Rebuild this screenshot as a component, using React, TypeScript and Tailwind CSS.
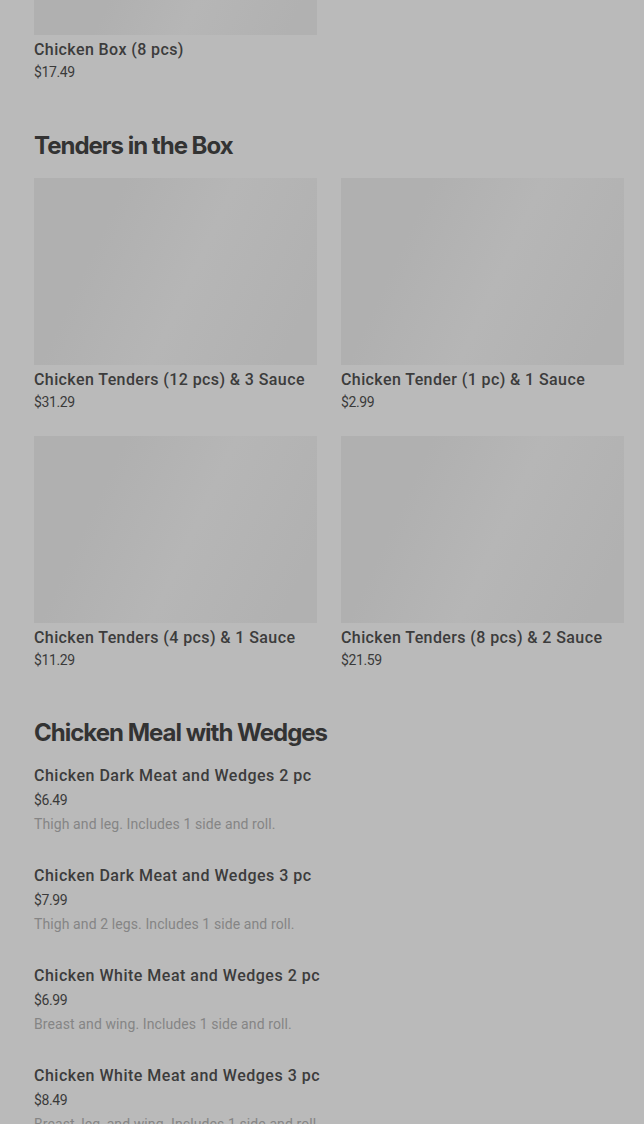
const tenders = [
  { name: 'Chicken Tenders (12 pcs) & 3 Sauce', price: '$31.29' },
  { name: 'Chicken Tender (1 pc) & 1 Sauce', price: '$2.99' },
  { name: 'Chicken Tenders (4 pcs) & 1 Sauce', price: '$11.29' },
  { name: 'Chicken Tenders (8 pcs) & 2 Sauce', price: '$21.59' },
];

const meals = [
  { name: 'Chicken Dark Meat and Wedges 2 pc', price: '$6.49', desc: 'Thigh and leg. Includes 1 side and roll.' },
  { name: 'Chicken Dark Meat and Wedges 3 pc', price: '$7.99', desc: 'Thigh and 2 legs. Includes 1 side and roll.' },
  { name: 'Chicken White Meat and Wedges 2 pc', price: '$6.99', desc: 'Breast and wing. Includes 1 side and roll.' },
  { name: 'Chicken White Meat and Wedges 3 pc', price: '$8.49', desc: 'Breast, leg, and wing. Includes 1 side and roll.' },
];

function Placeholder({ className }: { className: string }) {
  return (
    <div
      className={`bg-[linear-gradient(115deg,#b0b0b0_25%,#b6b6b6_55%,#b1b1b1_90%)] ${className}`}
    />
  );
}

function Card({ name, price }: { name: string; price: string }) {
  return (
    <div className="flex flex-col">
      <Placeholder className="h-[187px] w-full" />
      <div className="mt-[5px] text-[16px] leading-[20px] font-medium tracking-[0.4px] text-[#3c3c3c]">{name}</div>
      <div className="mt-[2px] text-[14px] leading-[20px] tracking-[-0.4px] text-[#3a3a3a]">{price}</div>
    </div>
  );
}

export default function App() {
  return (
    <div className="h-[1124px] overflow-hidden bg-[#bababa] pl-[34px] pr-[20px] font-['Roboto',sans-serif]">
      <div className="w-[283px]">
        <Placeholder className="h-[35px] w-full" />
        <div className="mt-[5px] text-[16px] leading-[20px] font-medium tracking-[0.4px] text-[#3c3c3c]">Chicken Box (8 pcs)</div>
        <div className="mt-[2px] text-[14px] leading-[20px] tracking-[-0.4px] text-[#3a3a3a]">$17.49</div>
      </div>

      <h2 className="mt-[48px] text-[24px] leading-[32px] font-bold tracking-[-1px] text-[#333] font-['Inter',sans-serif]">
        Tenders in the Box
      </h2>
      <div className="mt-[16px] grid grid-cols-2 gap-x-[24px] gap-y-[24px]">
        {tenders.map((t) => (
          <Card key={t.name} name={t.name} price={t.price} />
        ))}
      </div>

      <h2 className="mt-[47px] text-[24px] leading-[32px] font-bold tracking-[-1px] text-[#333] font-['Inter',sans-serif]">
        Chicken Meal with Wedges
      </h2>
      <div className="mt-[17px] flex flex-col gap-[32px]">
        {meals.map((m) => (
          <div key={m.name} className="flex flex-col">
            <div className="text-[16px] leading-[20px] font-medium tracking-[0.5px] text-[#3c3c3c]">{m.name}</div>
            <div className="mt-[4px] text-[14px] leading-[20px] tracking-[-0.4px] text-[#3a3a3a]">{m.price}</div>
            <div className="mt-[4px] text-[14px] leading-[20px] tracking-[0.1px] text-[#858585]">{m.desc}</div>
          </div>
        ))}
      </div>
    </div>
  );
}
